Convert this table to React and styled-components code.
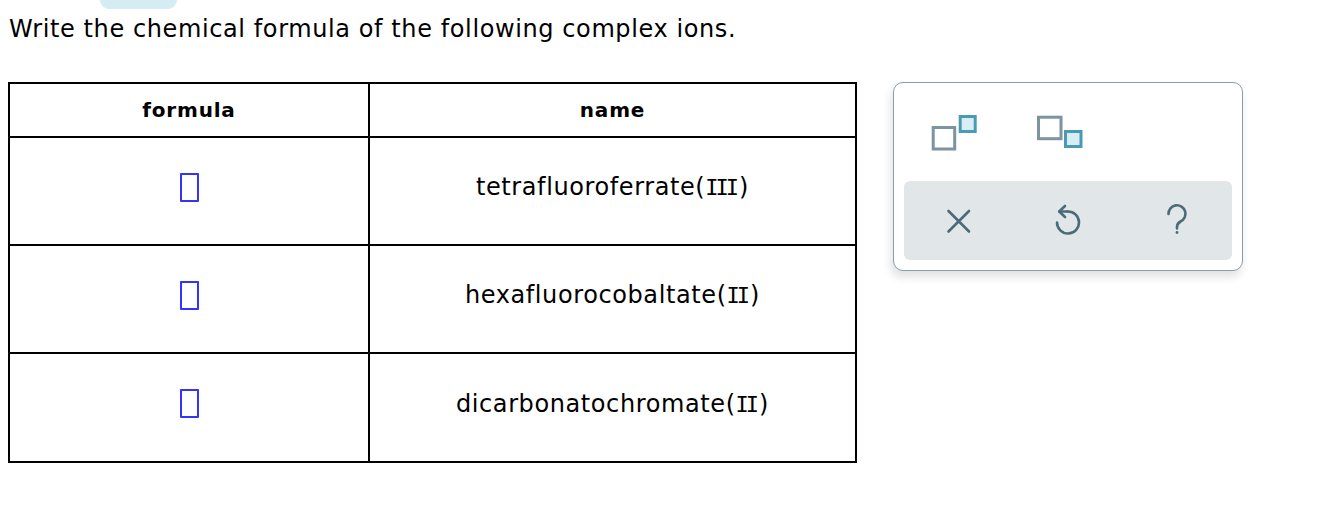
import React from 'react';
import styled, { createGlobalStyle } from 'styled-components';

const GlobalStyle = createGlobalStyle`
  html, body {
    margin: 0;
    padding: 0;
    background: #fff;
  }
  body {
    font-family: "DejaVu Sans", Verdana, sans-serif;
    font-variant-ligatures: none;
    color: #000;
  }
`;

const Page = styled.div`
  padding: 0 8px;
`;

const Tab = styled.div`
  margin-left: 92px;
  width: 77px;
  height: 9px;
  background: #d5ecf3;
  border-radius: 0 0 12px 12px;
`;

const Title = styled.h1`
  margin: 6px 0 0 1px;
  font-size: 24px;
  letter-spacing: 0.6px;
  font-weight: normal;
  line-height: 28px;
`;

const Body = styled.div`
  display: flex;
  align-items: flex-start;
  gap: 36px;
  margin-top: 39px;
`;

const Grid = styled.div`
  display: grid;
  grid-template-columns: 360px 487px;
  grid-template-rows: 54px 108px 108px 109px;
  border-top: 2px solid #000;
  border-left: 2px solid #000;
`;

const Row = styled.div`
  display: contents;
`;

const Cell = styled.div`
  display: flex;
  align-items: center;
  justify-content: center;
  box-sizing: border-box;
  border-right: 2px solid #000;
  border-bottom: 2px solid #000;
  padding-bottom: ${p => (p.$head ? 0 : 8)}px;
  font-size: ${p => (p.$head ? 20 : 24)}px;
  letter-spacing: ${p => (p.$head ? 0.8 : 0.6)}px;
  font-weight: ${p => (p.$head ? 'bold' : 'normal')};
`;

const Numeral = styled.span`
  font-family: "DejaVu Sans Mono", monospace;
  font-size: 22px;
  letter-spacing: -3px;
  margin-right: 3px;
`;

const Slot = styled.span`
  display: inline-block;
  width: 15px;
  height: 25px;
  border: 2px solid #3333ff;
  border-radius: 1px;
`;

const Panel = styled.div`
  width: 348px;
  height: 187px;
  border: 1px solid #8a9ea8;
  border-radius: 10px;
  background: #fff;
  box-shadow: -2px 6px 10px rgba(0, 0, 0, 0.12);
  display: flex;
  flex-direction: column;
`;

const Formats = styled.div`
  height: 98px;
  display: flex;
  align-items: center;
  padding-left: 37px;
  gap: 59px;
`;

const Actions = styled.div`
  margin: 0 10px 10px;
  height: 79px;
  background: #e1e6e9;
  border-radius: 6px;
  display: grid;
  grid-template-columns: repeat(3, 1fr);
  align-items: center;
  justify-items: center;
`;

const IconButton = styled.button`
  border: none;
  background: none;
  padding: 0;
  display: flex;
  color: #4b6b78;
  transform: translateY(${p => p.$dy || 0}px);
`;

const rows = [
  { name: 'tetrafluoroferrate', charge: 'III' },
  { name: 'hexafluorocobaltate', charge: 'II' },
  { name: 'dicarbonatochromate', charge: 'II' },
];

const SuperIcon = () => (
  <svg width="46" height="37" viewBox="0 0 46 37">
    <rect x="2.2" y="13.5" width="21.5" height="21.5" fill="#fff" stroke="#7b949e" strokeWidth="3" />
    <rect x="29.2" y="2.5" width="15" height="15" fill="#d6eef4" stroke="#4a9ab5" strokeWidth="3" />
  </svg>
);

const SubIcon = () => (
  <svg width="48" height="34" viewBox="0 0 48 34">
    <rect x="2.5" y="2.2" width="22.5" height="21.5" fill="#fff" stroke="#7b949e" strokeWidth="3" />
    <rect x="29.5" y="16.5" width="15.5" height="15" fill="#d6eef4" stroke="#4a9ab5" strokeWidth="3" />
  </svg>
);

const ClearIcon = () => (
  <svg width="28" height="26" viewBox="0 0 28 26" fill="none" stroke="currentColor" strokeWidth="2.6" strokeLinecap="round">
    <path d="M3.5 3L24 23.5M24 3L3.5 23.5" />
  </svg>
);

const UndoIcon = () => (
  <svg width="28" height="34" viewBox="0 0 28 34" fill="none" stroke="currentColor" strokeWidth="2.6" strokeLinecap="round" strokeLinejoin="round">
    <path d="M13.5 9.5 A11 11 0 1 1 3 20.5" />
    <path d="M11 4 L5.2 9.5 L11 15" />
    <path d="M5.5 9.5 H13.5" />
  </svg>
);

const HelpIcon = () => (
  <svg width="26" height="34" viewBox="0 0 26 34" fill="none" stroke="currentColor" strokeWidth="2.6" strokeLinecap="round">
    <path d="M4.5 12 A8.5 8.5 0 1 1 16.5 19.5 Q13 21.5 13 25 V26.5" />
    <circle cx="13" cy="30.5" r="1.4" fill="currentColor" stroke="none" />
  </svg>
);

export default function App() {
  return (
    <Page>
      <GlobalStyle />
      <Tab />
      <Title>Write the chemical formula of the following complex ions.</Title>
      <Body>
        <Grid>
          <Row>
            <Cell $head>formula</Cell>
            <Cell $head>name</Cell>
          </Row>
          {rows.map(r => (
            <Row key={r.name}>
              <Cell><Slot /></Cell>
              <Cell>
                <span>
                  {r.name}(<Numeral>{r.charge}</Numeral>)
                </span>
              </Cell>
            </Row>
          ))}
        </Grid>
        <Panel>
          <Formats>
            <SuperIcon />
            <SubIcon />
          </Formats>
          <Actions>
            <IconButton aria-label="clear"><ClearIcon /></IconButton>
            <IconButton aria-label="undo" $dy={-2}><UndoIcon /></IconButton>
            <IconButton aria-label="help" $dy={-2}><HelpIcon /></IconButton>
          </Actions>
        </Panel>
      </Body>
    </Page>
  );
}
